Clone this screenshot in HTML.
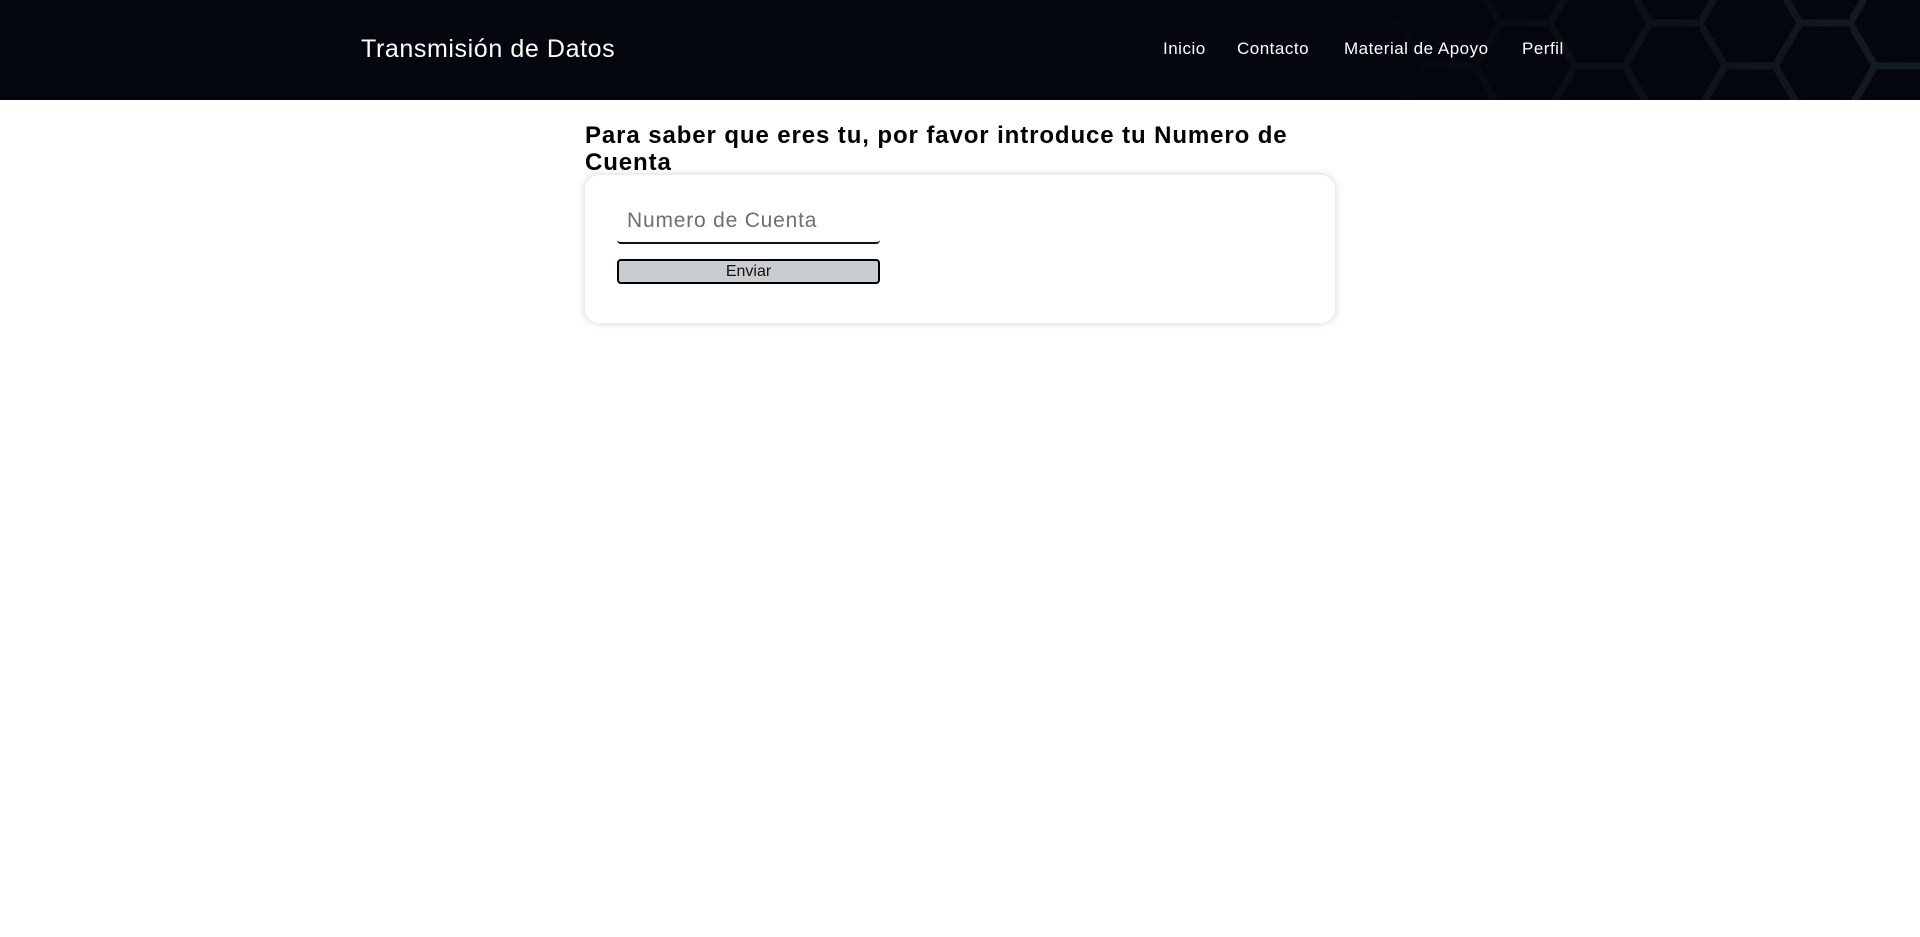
<!DOCTYPE html>
<html><head><meta charset="utf-8"><style>
*{margin:0;padding:0;box-sizing:border-box}
body{width:1920px;height:937px;background:#fff;font-family:"Liberation Sans",sans-serif;position:relative;overflow:hidden}
header{position:absolute;left:0;top:0;width:1920px;height:100px;background:#04060d;overflow:hidden}
header svg{position:absolute;left:0;top:0}
.title{position:absolute;left:361px;top:35px;font-size:25px;color:#fff;letter-spacing:0.6px;white-space:nowrap}
.nav{position:absolute;top:39px;font-size:17px;color:#fff;white-space:nowrap;letter-spacing:0.5px}
h1{position:absolute;left:585px;top:122px;width:740px;font-size:24px;line-height:27px;font-weight:bold;color:#000;letter-spacing:0.9px}
.card{position:absolute;left:585px;top:175px;width:750px;height:148px;background:#fff;border-radius:14px;box-shadow:0 0 8px rgba(0,0,0,.18)}
.inp{position:absolute;left:617px;top:200px;width:263px;height:44px;border-bottom:2px solid #111;border-radius:0 0 4px 4px}
.ph{position:absolute;left:627px;top:209px;font-size:21px;color:#6f6f6f;letter-spacing:0.8px}
.btn{position:absolute;left:617px;top:259px;width:263px;height:25px;background:#c9cdd0;border:2px solid #000;border-radius:4px;text-align:center;font-size:16px;line-height:21px;color:#111}
</style></head><body>
<header>
<svg width="1920" height="100" viewBox="0 0 1920 100">
<defs><linearGradient id="f" x1="0" x2="1"><stop offset="0.45" stop-color="#04060d" stop-opacity="1"/><stop offset="1" stop-color="#04060d" stop-opacity="0.3"/></linearGradient>
<pattern id="h" width="150" height="86" patternUnits="userSpaceOnUse" x="1550" y="-20">
<path d="M0 43 L25 0 L75 0 L100 43 L75 86 L25 86 Z M100 43 L150 43" fill="none" stroke="#1a252d" stroke-width="7"/>
</pattern></defs>
<rect x="900" y="0" width="1020" height="100" fill="url(#h)"/>
<rect x="900" y="0" width="1020" height="100" fill="url(#f)"/>
</svg>
<div class="title">Transmisión de Datos</div>
<div class="nav" style="left:1163px">Inicio</div>
<div class="nav" style="left:1237px">Contacto</div>
<div class="nav" style="left:1344px">Material de Apoyo</div>
<div class="nav" style="left:1522px">Perfil</div>
</header>
<h1>Para saber que eres tu, por favor introduce tu Numero de Cuenta</h1>
<div class="card"></div>
<div class="inp"></div>
<div class="ph">Numero de Cuenta</div>
<div class="btn">Enviar</div>
</body></html>
